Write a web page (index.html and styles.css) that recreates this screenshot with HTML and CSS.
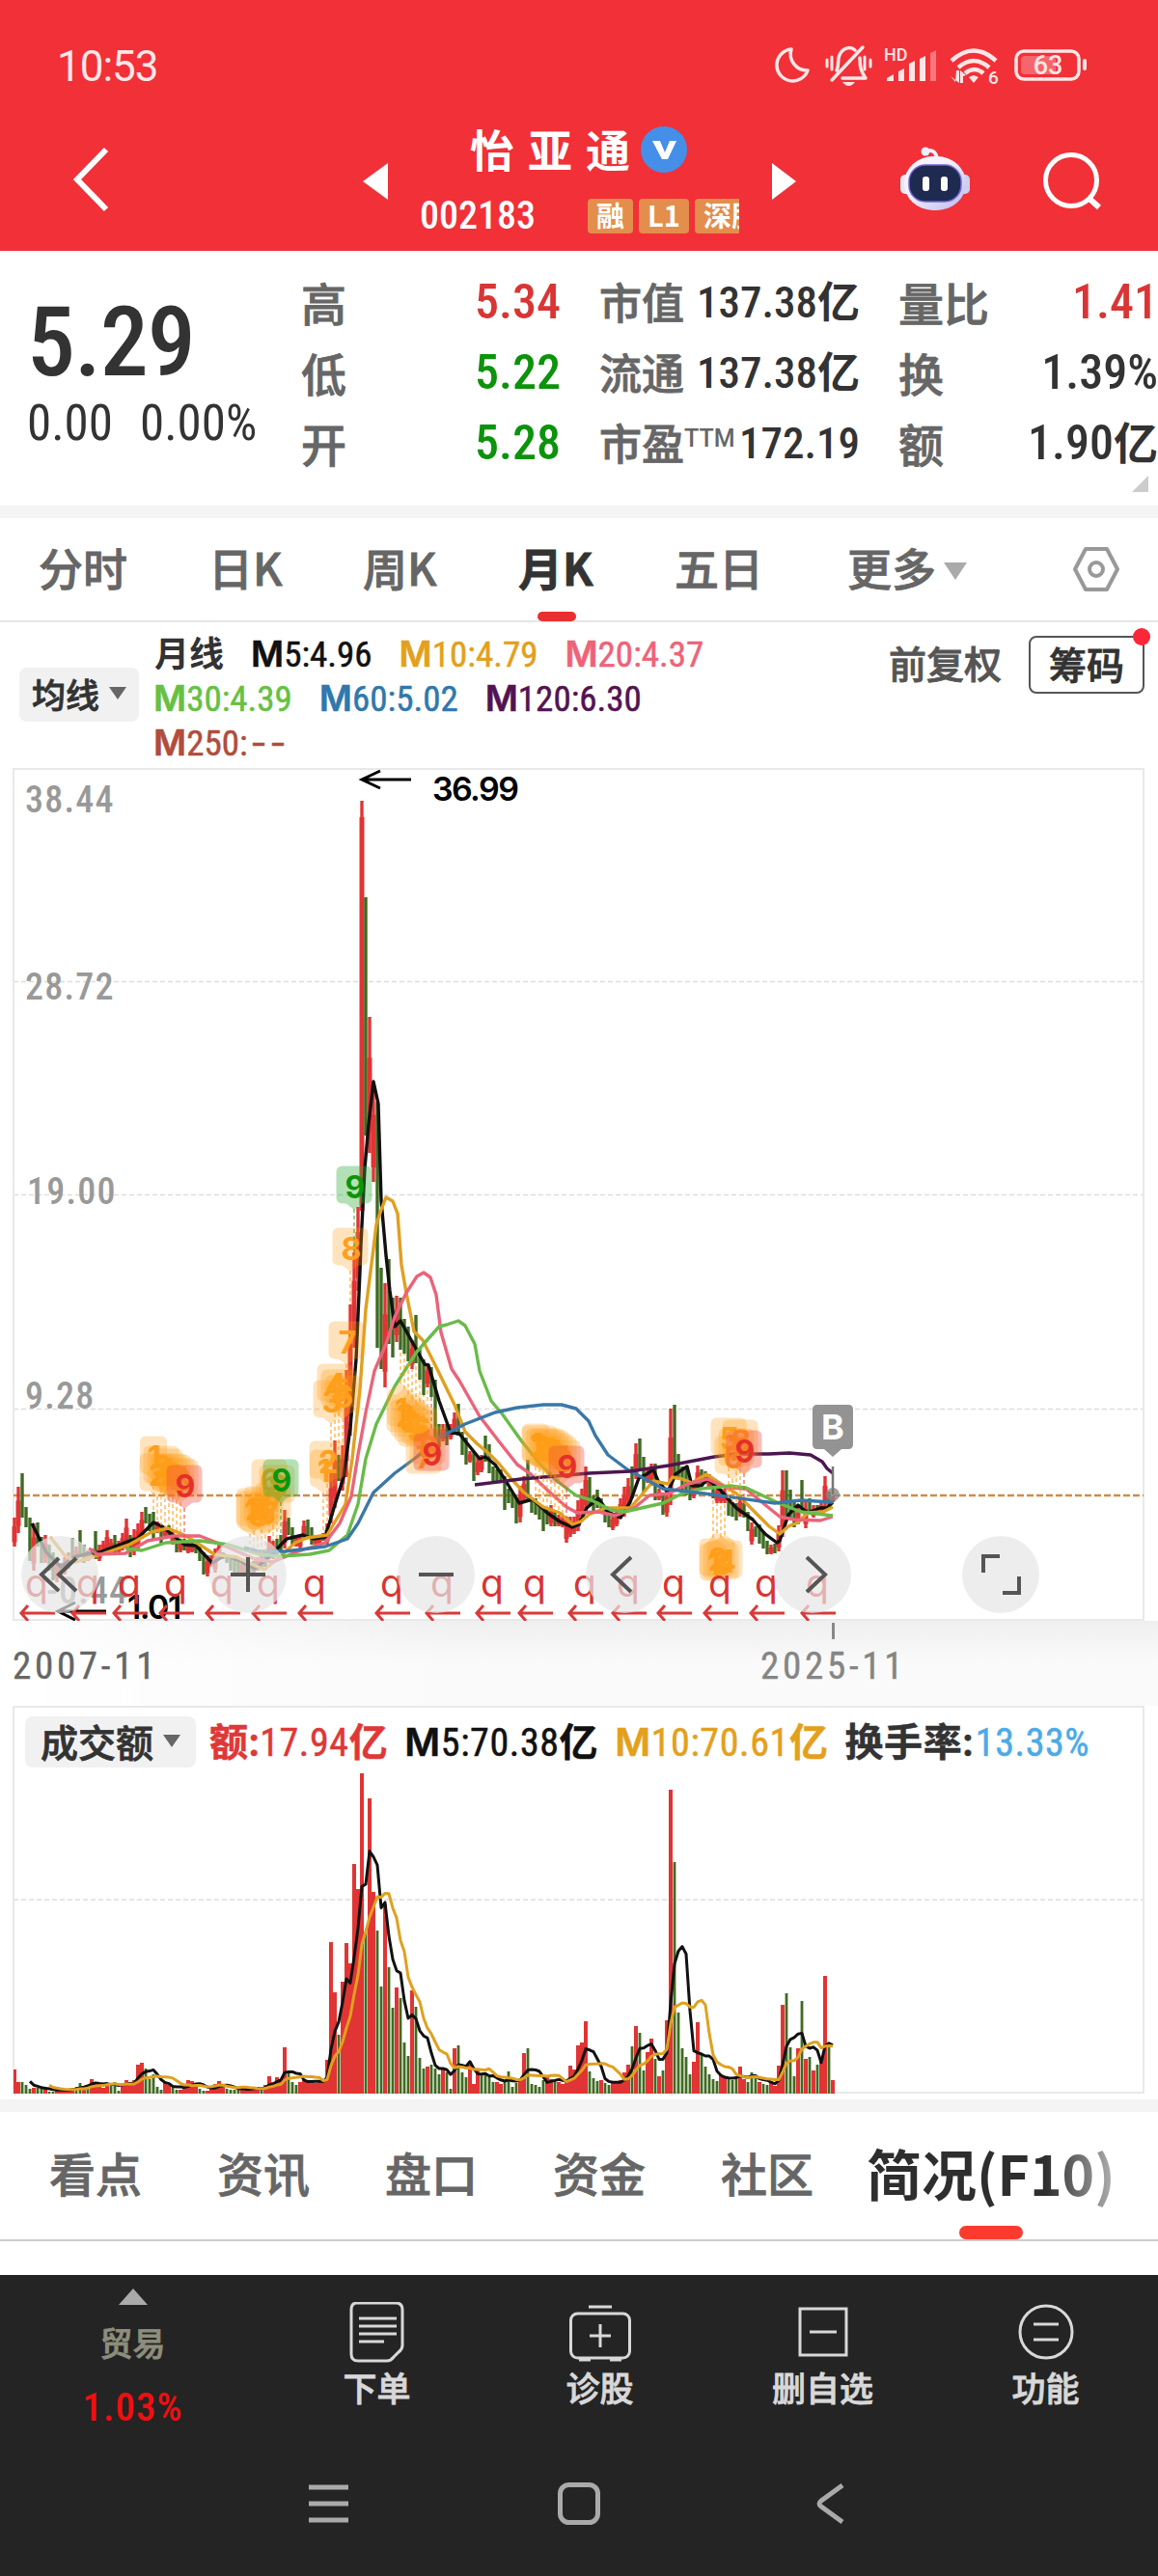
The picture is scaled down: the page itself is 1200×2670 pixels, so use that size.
FILE: index.html
```html
<!DOCTYPE html>
<html lang="zh-CN">
<head>
    <meta charset="UTF-8">
    <meta name="viewport" content="width=device-width, initial-scale=1.0">
    <title>怡亚通 002183</title>
    <link rel="stylesheet" href="styles.css">
</head>

<body>
    <header class="top">
        <div class="status">
            <span class="clock">10:53</span>
            <svg class="status-icons" viewBox="0 0 350 50" width="350" height="50">
                <g fill="none" stroke="#ffe6e6" stroke-width="3.5" stroke-linecap="round" stroke-linejoin="round">
                    <path d="M19 8a16.500 16.500 0 1 0 17 22A17 17 0 0 1 19 8z"/>
                    <path d="M66 30c3-6 0-12 4-18 4-6 11-7 15-3M90 17c0 9 1 14 6 21H72M93 6L61 40"/>
                    <path d="M56 19v7M61 16v13M95 16v13M101 19v7" stroke-width="3"/>
                    <rect x="252" y="10" width="65" height="29" rx="8"/>
                    <path d="M323 20v8" stroke-width="4"/>
                </g>
                <g fill="#ffe6e6">
                    <path d="M72 42h13q-3 4-6.500 4t-6.500-4z"/>
                    <text x="115" y="20" font-size="18" class="num wide">HD</text>
                    <path d="M118 41v-3l7-4v7zM130 41V31l6-3v13zM141 41V23l6-3v21zM152 41V18l6-3v26z"/>
                    <path d="M163 41V12l6-3v32z" opacity=".4"/>
                    <path d="M203 37l5-2 5 2-5 6z"/>
                    <path d="M184 36l5 6 1-12h3v13zM194 43V30l6 5-3 1v7z"/>
                    <text x="223" y="44" font-size="19" font-weight="700" class="num wide">6</text>
                    <rect x="257" y="15" width="36" height="19" rx="4" opacity=".3"/>
                    <text x="285" y="34" font-size="27" text-anchor="middle" class="num wide">63</text>
                </g>
                <g fill="none" stroke="#ffe6e6" stroke-width="4.5">
                    <path d="M185 20q23-21 46 0M192 27q16-14 32 0M199 33q10-8 19 0"/>
                </g>
            </svg>
        </div>
        <div class="titlebar">
            <svg class="back" viewBox="0 0 40 70" width="40" height="70"><path d="M36 4L6 35l30 31" fill="none" stroke="#fff" stroke-width="6"/></svg>
            <svg class="prev" viewBox="0 0 28 40" width="28" height="40"><path d="M27 1v38L1 20z" fill="#fff"/></svg>
            <div class="stock">
                <div class="name"><h1>怡亚通</h1>
                    <svg viewBox="0 0 48 48" width="48" height="48"><circle cx="24" cy="24" r="24" fill="#458fe9"/><path d="M12 15h8l5 12 5-12h7l-9 19h-6z" fill="#fff"/></svg>
                </div>
                <div class="code"><span class="num">002183</span><div class="tags"><b>融</b><b>L1</b><b>深股通</b></div></div>
            </div>
            <svg class="next" viewBox="0 0 28 40" width="28" height="40"><path d="M1 1v38l25-19z" fill="#fff"/></svg>
            <svg class="robot" viewBox="0 0 72 70" width="72" height="70">
                <defs><linearGradient id="shell" x2="1" y2="1"><stop offset=".4" stop-color="#f6f3fc"/><stop offset="1" stop-color="#b9b5ef"/></linearGradient></defs>
                <path d="M26 5q11-4 12 9" fill="none" stroke="#f1eefa" stroke-width="4"/>
                <circle cx="26" cy="5" r="4.5" fill="#efedfb"/>
                <rect x="0" y="29" width="12" height="20" rx="5" fill="#e9e7f6"/><rect x="60" y="29" width="12" height="20" rx="5" fill="#cfcdf1"/>
                <rect x="4" y="10" width="64" height="56" rx="30" fill="url(#shell)"/>
                <rect x="9" y="19" width="54" height="38" rx="17" fill="#1e2a50" stroke="#7263d8" stroke-width="1.5"/>
                <rect x="23" y="31" width="7" height="15" rx="3" fill="#fff"/><rect x="42" y="31" width="7" height="15" rx="3" fill="#fff"/>
            </svg>
            <svg class="search" viewBox="0 0 62 62" width="62" height="62"><g fill="none" stroke="#fff" stroke-width="5"><circle cx="30" cy="30" r="26.5"/><path d="M49 49l10 9" stroke-width="6"/></g></svg>
        </div>
    </header>

    <section class="quote">
        <div class="price">
            <div class="last num">5.29</div>
            <div class="change num"><span>0.00</span><span>0.00%</span></div>
        </div>
        <dl class="c1">
            <dt>高</dt><dd class="num up">5.34</dd>
            <dt>低</dt><dd class="num down">5.22</dd>
            <dt>开</dt><dd class="num down">5.28</dd>
        </dl>
        <dl class="c2">
            <dt>市值</dt><dd class="num">137.38<b>亿</b></dd>
            <dt>流通</dt><dd class="num">137.38<b>亿</b></dd>
            <dt>市盈<sup class="num wide">TTM</sup></dt><dd class="num">172.19</dd>
        </dl>
        <dl class="c3">
            <dt>量比</dt><dd class="num up">1.41</dd>
            <dt>换</dt><dd class="num">1.39%</dd>
            <dt>额</dt><dd class="num">1.90<b>亿</b></dd>
        </dl>
        <i class="corner"></i>
    </section>

    <nav class="periods">
        <a>分时</a><a>日K</a><a>周K</a><a class="on">月K</a><a>五日</a><a>更多<i class="caret"></i></a>
        <svg viewBox="0 0 50 50" width="50" height="50"><g fill="none" stroke="#999" stroke-width="4" stroke-linejoin="round"><path d="M14 4h22l11 21-11 21H14L3 25z"/><circle cx="25" cy="25" r="7"/></g></svg>
    </nav>

    <section class="legend">
        <button class="pick">均线<i class="caret"></i></button>
        <div class="averages">
            <p><strong>月线</strong><span class="num m5"><b>M</b>5:4.96</span><span class="num m10"><b>M</b>10:4.79</span><span class="num m20"><b>M</b>20:4.37</span></p>
            <p><span class="num m30"><b>M</b>30:4.39</span><span class="num m60"><b>M</b>60:5.02</span><span class="num m120"><b>M</b>120:6.30</span></p>
            <p><span class="num m250"><b>M</b>250:<i>--</i></span></p>
        </div>
        <span class="adjust">前复权</span>
        <button class="chips">筹码</button>
    </section>

    <section class="kline">
        <svg id="kline" viewBox="0 790 1200 890" width="1200" height="890">
            <g class="grid">
                <path d="M14 1017.5H1185M14 1238.5H1185M14 1460.5H1185"/>
                <rect x="14" y="797" width="1171" height="882"/>
            </g>
            <path class="now" d="M14 1550H1185"/>
            <g id="candles"></g>
            <g class="lines">
                <polyline class="l5" points="33,1579 38,1589 48,1609 63,1624 77,1614 92,1610 103,1609 132,1598 142,1595 159,1578 168,1582 191,1601 203,1602 220,1620 233,1612 249,1618 264,1626 279,1614 297,1595 314,1591 325,1595 337,1593 346,1563 356,1531 363,1480 369,1409 373,1318 374,1290 378,1211 382,1165 387,1121 392,1144 395,1244 400,1301 404,1338 409,1375 415,1369 425,1387 440,1414 444,1415 455,1452 467,1485 476,1486 497,1512 503,1510 513,1518 523,1533 538,1558 552,1554 567,1568 580,1577 593,1583 600,1580 608,1563 620,1553 630,1567 643,1573 653,1557 662,1532 670,1528 677,1523 682,1535 692,1547 700,1528 712,1520 717,1540 727,1540 733,1533 747,1545 763,1563 780,1575 793,1590 805,1599 808,1597 817,1570 827,1560 837,1568 850,1563 857,1563 863,1557"/>
                <polyline class="l10" points="52,1593 67,1612 78,1619 96,1614 134,1601 157,1588 174,1584 191,1591 207,1601 222,1611 245,1614 274,1627 287,1616 306,1599 318,1594 339,1591 358,1559 365,1512 373,1440 379,1357 387,1294 390,1269 395,1254 400,1241 407,1245 412,1258 416,1311 421,1340 429,1380 438,1389 452,1417 471,1456 482,1484 494,1496 507,1507 517,1517 530,1533 543,1547 563,1562 580,1568 593,1580 602,1577 610,1570 627,1563 653,1563 667,1547 677,1535 692,1538 697,1531 707,1533 717,1537 732,1528 747,1538 763,1548 780,1565 797,1582 808,1590 817,1582 827,1578 837,1568 853,1567 863,1562"/>
                <polyline class="l20" points="92,1605 101,1611 130,1610 153,1597 180,1592 207,1592 230,1601 264,1616 283,1619 306,1609 337,1599 352,1579 364,1551 371,1508 379,1464 388,1421 400,1393 409,1365 421,1340 432,1323 439,1319 446,1324 452,1342 457,1381 468,1419 476,1431 497,1468 517,1494 536,1518 550,1528 570,1547 587,1562 598,1568 620,1567 638,1571 657,1563 673,1550 693,1548 713,1538 733,1533 753,1542 773,1543 787,1555 808,1572 823,1575 850,1576 863,1572"/>
                <polyline class="l30" points="130,1605 147,1607 172,1599 207,1597 237,1601 268,1611 291,1613 321,1611 341,1607 360,1591 371,1559 379,1512 390,1476 409,1437 432,1401 455,1375 463,1373 475,1369 482,1374 492,1393 497,1421 509,1452 520,1465 540,1493 560,1518 577,1535 597,1550 613,1555 633,1565 647,1567 687,1558 707,1548 727,1543 757,1540 773,1542 807,1558 830,1567 863,1571"/>
                <polyline class="l60" points="253,1604 268,1608 295,1608 337,1603 360,1595 371,1579 387,1547 409,1527 432,1510 455,1490 482,1476 513,1464 536,1459 563,1456 582,1456 597,1460 610,1473 617,1488 630,1508 650,1523 687,1543 730,1548 803,1558 830,1555 863,1557"/>
                <polyline class="l120" points="492,1539 540,1533 610,1527 653,1525 693,1519 740,1510 763,1507 797,1507 818,1506 840,1508 852,1515 857,1522 863,1527"/>
            </g>
            <g id="turns"></g>
            <g class="axis num">
                <text x="26" y="842">38.44</text>
                <text x="26" y="1036">28.72</text>
                <text x="28" y="1248">19.00</text>
                <text x="26" y="1460">9.28</text>
                <text x="48" y="1662">-0.44</text>
            </g>
            <g class="extreme">
                <path d="M375 808h51M394 799l-19 9 19 9M60 1670h50M78 1661l-18 9 18 9"/>
                <text x="448" y="830">36.99</text>
                <text x="132" y="1678">1.01</text>
            </g>
            <g id="rights"></g>
            <g class="buy">
                <circle cx="863" cy="1549" r="7"/>
                <path d="M863 1520V1549" stroke-width="2.5"/>
                <path d="M847 1456h32q5 0 5 5v36q0 5-5 5h-7l-9 8v20v-20l-9-8h-7q-5 0-5-5v-36q0-5 5-5z"/>
                <text x="863" y="1492">B</text>
            </g>
        </svg>
        <div class="tools">
            <button><svg viewBox="0 0 80 80"><path d="M39 23L21 40l18 17M57 23L39 40l18 17"/></svg></button>
            <button><svg viewBox="0 0 80 80"><path d="M22 40h36M40 22v36"/></svg></button>
            <button><svg viewBox="0 0 80 80"><path d="M22 40h36"/></svg></button>
            <button><svg viewBox="0 0 80 80"><path d="M47 22L28 40l19 18"/></svg></button>
            <button><svg viewBox="0 0 80 80"><path d="M34 22l19 18-19 18"/></svg></button>
            <button><svg viewBox="0 0 80 80"><path d="M22 38V21h17M59 42v17H42"/></svg></button>
        </div>
    </section>

    <div class="dates num"><span>2007-11</span><span class="end">2025-11</span></div>

    <section class="volume">
        <div class="vol-head">
            <button class="pick">成交额<i class="caret"></i></button>
            <span class="num v0"><b>额:</b>17.94<b>亿</b></span>
            <span class="num v1"><b>M</b>5:70.38<b>亿</b></span>
            <span class="num v2"><b>M</b>10:70.61<b>亿</b></span>
            <span class="num v3"><b>换手率:</b><em>13.33%</em></span>
        </div>
        <svg id="volume" viewBox="14 1834 1171 337" width="1171" height="337">
            <path class="mid" d="M14 1969H1185"/>
        </svg>
    </section>

    <nav class="sections">
        <a>看点</a><a>资讯</a><a>盘口</a><a>资金</a><a>社区</a><a class="on"><b>简况(F10)</b></a>
    </nav>

    <footer>
        <div class="actions">
            <a class="sector"><i class="tri"></i><span>贸易</span><em class="num">1.03%</em></a>
            <a><svg viewBox="0 0 64 64" width="64" height="64"><g><path d="M11 1h40q7 0 7 7v37q0 4-4 7l-5 5q-3 4-7 4H12q-7 0-7-7V8q0-7 6-7z"/><path d="M13 17h39M13 25h39M13 33h39M13 41h26"/></g></svg><span>下单</span></a>
            <a><svg viewBox="0 0 64 64" width="64" height="64"><g><rect x="1.5" y="12" width="61" height="46" rx="7"/><path d="M20 5h24M32 23v24M21 35h22M10 60h12M42 60h12"/></g></svg><span>诊股</span></a>
            <a><svg viewBox="0 0 64 64" width="64" height="64"><g><path d="M8 7h48v48H8zM18 31h28"/></g></svg><span>删自选</span></a>
            <a><svg viewBox="0 0 64 64" width="64" height="64"><g><circle cx="32" cy="31" r="27"/><path d="M19 23h26M19 39h26"/></g></svg><span>功能</span></a>
        </div>
        <div class="keys">
            <svg viewBox="0 0 44 44" width="44" height="44"><path d="M3 5h41M3 22h41M3 39h41"/></svg>
            <svg viewBox="0 0 44 44" width="44" height="44"><rect x="2.500" y="2.500" width="39" height="39" rx="9"/></svg>
            <svg viewBox="0 0 44 44" width="44" height="44"><path d="M34 3L12 19q-4 3 0 6l22 16"/></svg>
        </div>
    </footer>

    <script src="chart.js"></script>
</body>
</html>
```
FILE: styles.css
```css
* {
    box-sizing: border-box;
}

body {
    margin: 0;
    width: 1200px;
    background: #fff;
    color: #333;
    font-family: "Noto Sans CJK SC", sans-serif;
    font-weight: 500;
    overflow-x: hidden;
}

svg {
    display: block;
}

button {
    border: 0;
    padding: 0;
    font: inherit;
    color: inherit;
}

.num {
    font-family: Roboto, "Noto Sans CJK SC", sans-serif;
    font-stretch: 87%;
    font-weight: 500;
    white-space: nowrap;
}

.wide {
    font-stretch: 100%;
}

/* thicken the regular CJK weight a little */
.quote dt,
.periods a,
.sections a,
.pick,
.adjust,
.chips,
.actions span {
    -webkit-text-stroke: .8px;
}

/* header */
.top {
    height: 260px;
    background: #f13038;
    color: #fff;
}

.status {
    display: flex;
    justify-content: space-between;
    height: 125px;
    padding: 43px 49px 0 59px;
}

.clock {
    font: 400 44px/52px Roboto, sans-serif;
    letter-spacing: -1px;
    color: #ffe6e6;
}

.titlebar {
    display: grid;
    grid-template-columns: 301px 60px 364px 134px 144px 62px;
    padding-left: 74px;
    height: 135px;
}

.back {
    margin-top: 26px;
}

.prev,
.next {
    margin-top: 43px;
}

.name {
    display: flex;
    align-items: center;
    margin-left: 52px;
    height: 58px;
}

.name svg {
    margin: 2px 0 0 -3px;
}

h1 {
    margin: -3px 0 0;
    font-size: 46px;
    font-weight: 700;
    letter-spacing: 14px;
    line-height: 56px;
}

.code {
    display: flex;
    justify-content: space-between;
    width: 331px;
    margin-top: 20px;
    font-size: 40px;
    line-height: 42px;
}

.tags {
    display: flex;
    gap: 6px;
    width: 157px;
    overflow: hidden;
    padding-top: 3px;
}

.tags b {
    flex: none;
    height: 36px;
    min-width: 47px;
    padding: 0 9px;
    border-radius: 4px;
    background: #e38e4c;
    font-size: 29px;
    font-weight: 700;
    line-height: 33px;
    text-align: center;
}

.robot {
    margin-top: 27px;
}

.search {
    margin-top: 32px;
    margin-left: 3px;
}

/* quote */
.quote {
    position: relative;
    display: grid;
    grid-template-columns: 244px 268px 269px 268px;
    column-gap: 41px;
    height: 277px;
    padding: 18px 0 0 28px;
    border-bottom: 13px solid #f4f4f4;
}

.quote dl {
    display: grid;
    grid-template-columns: 86px 1fr;
    grid-auto-rows: 73px;
    align-items: center;
    margin: -2px 0 0 -1px;
    font-size: 47px;
    line-height: 73px;
}

.quote dt {
    color: #666;
    white-space: nowrap;
}

.quote dd {
    margin: 2px 0 0;
    text-align: right;
    font-size: 50px;
}

.quote dd b {
    font-size: 46px;
    font-weight: 700;
}

.quote .c2 {
    font-size: 44px;
}

.quote .c2 dd {
    font-size: 45px;
}

.quote .c2 dd b {
    font-size: 44px;
}

.quote sup {
    font-size: 25px;
    vertical-align: 14px;
    line-height: 0;
    -webkit-text-stroke: 0;
}

.quote .up {
    color: #d93535;
}

.quote .down {
    color: #0c930c;
}

.last {
    margin-top: 21px;
    font-size: 100px;
    line-height: 112px;
    letter-spacing: -1px;
}

.change {
    display: flex;
    gap: 28px;
    margin-top: -2px;
    font-size: 51px;
    font-weight: 400;
    line-height: 60px;
}

.corner {
    position: absolute;
    right: 10px;
    bottom: 14px;
    border-left: 17px solid transparent;
    border-bottom: 17px solid #ccc;
}

/* period tabs */
.periods {
    display: grid;
    grid-template-columns: 176px 160px 161px 162px 179px 233px 50px;
    align-items: center;
    height: 108px;
    padding-left: 40px;
    border-bottom: 2px solid #e6e6e6;
    color: #666;
    font-size: 46px;
    line-height: 101px;
}

.periods a {
    height: 106px;
}

.periods .on {
    position: relative;
    color: #333;
    font-weight: 700;
}

.periods .on::after {
    content: "";
    position: absolute;
    left: 20px;
    bottom: -1px;
    width: 40px;
    height: 10px;
    border-radius: 5px;
    background: #e93030;
}

.caret {
    display: inline-block;
    margin-left: 11px;
    border: 9px solid transparent;
    border-top: 13px solid #666;
    border-bottom: 0;
    vertical-align: 6px;
}

.periods .caret {
    margin-left: 8px;
    border-width: 18px 12px 0;
    border-top-color: #aaa;
}

/* moving average legend */
.legend {
    display: flex;
    align-items: flex-start;
    height: 145px;
    padding-left: 20px;
}

.pick {
    display: flex;
    align-items: center;
    justify-content: center;
    border-radius: 8px;
    background: #f1f1f1;
}

.pick .caret {
    margin-left: 10px;
    vertical-align: 0;
}

.legend .pick {
    width: 124px;
    height: 56px;
    margin-top: 47px;
    padding-bottom: 3px;
    font-size: 35px;
}

.averages {
    width: 762px;
    margin-left: 15px;
    padding-top: 10px;
    font-size: 37px;
}

.averages p {
    display: flex;
    gap: 28px;
    margin: 0;
    height: 46px;
    line-height: 46px;
}

.averages strong {
    margin: -3px 0 0 1px;
    font-size: 36px;
}

.averages .num {
    font-weight: 400;
}

.averages .num,
.vol-head .num {
    -webkit-text-stroke: .5px;
}

.averages b,
.v1 b:first-child,
.v2 b:first-child {
    font-family: Inter, sans-serif;
    font-weight: 600;
}

.averages i {
    margin-left: 3px;
    font-family: Inter, sans-serif;
    font-style: normal;
    letter-spacing: 3px;
}

.m5, .v1 { color: #111; }
.m10, .v2 { color: #e3a01c; }
.m20 { color: #ee6379; }
.m30 { color: #66c141; }
.m60 { color: #2f78ad; }
.m120 { color: #531352; }
.m250 { color: #b04d3c; }

.adjust {
    margin-top: 19px;
    color: #555;
    font-size: 39px;
    line-height: 44px;
}

.chips {
    position: relative;
    width: 120px;
    height: 60px;
    margin: 14px 0 0 28px;
    border: 2px solid #555;
    border-radius: 8px;
    background: #fff;
    font-size: 39px;
    line-height: 50px;
    padding-bottom: 5px;
}

.chips::after {
    content: "";
    position: absolute;
    top: -10px;
    right: -8px;
    width: 18px;
    height: 18px;
    border-radius: 50%;
    background: #fb2637;
}

/* main chart */
.kline {
    position: relative;
    height: 890px;
}

.grid path {
    stroke: #ddd;
    stroke-width: 1.500;
    stroke-dasharray: 5 3;
}

.grid rect {
    fill: none;
    stroke: #e9e9e9;
    stroke-width: 2;
}

.now {
    stroke: #cd8d4a;
    stroke-width: 2.500;
    stroke-dasharray: 7 3;
}

.lines polyline {
    fill: none;
    stroke-width: 3.400;
    stroke-linejoin: round;
}

.l5 { stroke: #111; }
.l10 { stroke: #e0a020; }
.l20 { stroke: #ea647a; }
.l30 { stroke: #6abb4a; }
.l60 { stroke: #3a78a8; }
.l120 { stroke: #4c1650; }

.r { fill: #e13434; }
.g { fill: #3f6b22; }

.axis {
    fill: #999;
    font-size: 38px;
    letter-spacing: 1.2px;
}

.extreme path {
    fill: none;
    stroke: #000;
    stroke-width: 3;
}

.extreme text {
    font: 600 34px Inter, sans-serif;
    letter-spacing: -1.6px;
}

.mark {
    fill: #d93434;
    font: 400 39px Inter, sans-serif;
    text-anchor: middle;
}

.mark-arrow {
    fill: none;
    stroke: #d93a38;
    stroke-width: 3;
}

.turn {
    font: 700 32px Inter, sans-serif;
    text-anchor: middle;
}

.drop {
    stroke-width: 1.500;
    stroke-dasharray: 4 3;
}

.buy path {
    fill: #939393;
    stroke: #777;
    stroke-width: 0;
}

.buy path[stroke-width] {
    stroke-width: 2.500;
}

.buy circle {
    fill: #8a8a8a;
    opacity: .8;
}

.buy text {
    fill: #fff;
    font: 700 36px Inter, sans-serif;
    text-anchor: middle;
}

.tools {
    position: absolute;
    top: 802px;
    left: 22px;
    display: flex;
    gap: 115px;
}

.tools button {
    width: 80px;
    height: 80px;
    border-radius: 50%;
    background: rgba(229, 229, 229, .7);
}

.tools path {
    fill: none;
    stroke: #555;
    stroke-width: 4;
}

.dates {
    display: flex;
    height: 88px;
    padding-left: 13px;
    background: linear-gradient(90deg, #fff, rgba(255, 255, 255, 0) 40%), linear-gradient(#efefef, #fafafa 50%);
    color: #666;
    font-size: 39px;
    font-weight: 400;
    line-height: 95px;
    letter-spacing: 3.7px;
    -webkit-text-stroke: .4px;
}

.dates .end {
    position: relative;
    margin-left: 624px;
    color: #858585;
}

.dates .end::before {
    content: "";
    position: absolute;
    left: 74px;
    top: 2px;
    width: 3px;
    height: 17px;
    background: #888;
}

/* turnover */
.volume {
    width: 1173px;
    height: 402px;
    margin: 0 0 6px 13px;
    border: 2px solid #e9e9e9;
}

.volume svg {
    margin: -1px;
}

.vol-head {
    display: flex;
    align-items: center;
    height: 65px;
    padding: 6px 0 0 11px;
    font-size: 40px;
    line-height: 54px;
}

.vol-head .num {
    margin: 2px 17px 0 0;
    font-weight: 400;
    letter-spacing: .6px;
}

.vol-head .pick {
    width: 177px;
    height: 53px;
    margin: 0 14px 0 0;
    padding-bottom: 3px;
    font-size: 39px;
}

.vol-head b {
    font-weight: 700;
}

.v0 { color: #de3838; }

.v3 em {
    margin-left: 2px;
    color: #4caae6;
    font-style: normal;
}

.mid {
    stroke: #e6e6e6;
    stroke-width: 2;
    stroke-dasharray: 5 3;
}

.avg {
    fill: none;
    stroke-width: 3;
    stroke-linejoin: round;
}

/* section tabs */
.sections {
    display: grid;
    grid-template-columns: repeat(4, 174px) 151px 260px;
    height: 147px;
    padding-left: 51px;
    border-top: 13px solid #f4f4f4;
    border-bottom: 2px solid #ccc;
    color: #666;
    font-size: 48px;
    line-height: 125px;
}

.sections .on {
    position: relative;
    font-size: 57px;
}

.sections .on b {
    color: transparent;
    background: linear-gradient(90deg, #2e2e2e 72%, #aaa 98%);
    background-clip: text;
    -webkit-background-clip: text;
    font-weight: 700;
    -webkit-text-stroke: 0;
}

.sections .on::after {
    content: "";
    position: absolute;
    left: 96px;
    bottom: 0;
    width: 66px;
    height: 14px;
    border-radius: 7px;
    background: #fc3b2f;
}

/* footer */
footer {
    height: 312px;
    margin-top: 35px;
    background: #242424;
    color: #d8d8d8;
}

.actions {
    display: grid;
    grid-template-columns: 275px repeat(4, 231px);
    height: 200px;
}

.actions a {
    display: flex;
    flex-direction: column;
    align-items: center;
    padding-top: 28px;
    font-size: 35px;
    line-height: 52px;
}

.actions span {
    margin-top: -2px;
}

.actions g {
    fill: none;
    stroke: #d8d8d8;
    stroke-width: 3;
}

.actions .sector {
    padding-top: 14px;
    color: #8d8d7c;
}

.sector .tri {
    border: 15px solid transparent;
    border-top: 0;
    border-bottom: 17px solid #aaa;
}

.actions .sector span {
    margin-top: 13px;
    font-size: 34px;
}

.sector em {
    margin-top: 15px;
    color: #f00f0f;
    font-size: 41px;
    font-style: normal;
    letter-spacing: 1px;
}

.keys {
    display: flex;
    gap: 217px;
    padding: 15px 0 0 317px;
}

.keys svg {
    fill: none;
    stroke: #aaa;
    stroke-width: 5;
}
```
FILE: chart.js
```javascript
const NS = 'http://www.w3.org/2000/svg';
const STEP = 4;
const LEFT = 15;

function add(parent, tag, attrs, text) {
    const el = document.createElementNS(NS, tag);
    for (const k in attrs) el.setAttribute(k, attrs[k]);
    if (text !== undefined) el.textContent = text;
    parent.appendChild(el);
    return el;
}

// one candle per month: r/g, high, low
const candles = `r1573-1603 r1541-1589 g1527-1573 g1562-1583 g1573-1618 r1579-1628 g1578-1603 g1593-1620 r1591-1620 g1601-1628
g1609-1638 r1614-1640 g1620-1634 r1614-1632 r1609-1626 g1594-1618 r1603-1618 g1586-1614 g1601-1620 r1607-1618
g1605-1614 g1587-1616 r1601-1618 r1597-1610 r1586-1610 r1595-1609 g1591-1610 r1597-1610 r1589-1607 r1574-1605
g1591-1614 r1585-1612 r1579-1605 r1567-1595 g1562-1579 g1569-1587 g1567-1595 r1577-1589 g1581-1601 r1583-1593
g1581-1593 r1587-1601 g1591-1609 r1595-1609 g1595-1607 r1599-1610 r1599-1609 g1601-1610 g1603-1618 g1609-1632
r1612-1634 r1612-1624 r1605-1630 r1599-1614 g1609-1616 g1611-1620 g1612-1628 g1616-1630 g1618-1632 r1618-1632
g1620-1630 r1620-1630 g1618-1630 r1614-1628 r1612-1626 g1608-1624 r1592-1614 r1597-1616 g1595-1612 g1591-1607
r1565-1605 g1573-1591 g1583-1601 r1591-1603 r1591-1605 r1576-1595 g1575-1595 g1583-1601 r1591-1601 r1593-1601
g1589-1597 r1579-1601 r1527-1579 r1493-1563 g1508-1535 r1498-1545 r1420-1531 r1352-1488 r1298-1397 r1251-1338
r830-1255 g930-1177 r1054-1195 r1126-1225 g1142-1397 g1314-1419 r1330-1438 g1305-1393 g1345-1407 r1343-1391
g1345-1399 g1367-1403 g1375-1411 r1389-1419 g1363-1413 g1397-1430 g1409-1446 r1413-1438 g1417-1448 g1430-1496
g1476-1500 r1476-1494 g1476-1498 r1476-1492 r1464-1486 g1455-1488 g1484-1508 g1490-1518 r1504-1516 g1504-1535
r1510-1529 r1508-1526 g1488-1515 g1497-1527 g1520-1537 g1523-1535 g1523-1535 g1530-1565 g1543-1558 g1547-1563
g1552-1579 r1540-1578 r1530-1557 g1513-1555 g1552-1568 g1553-1570 g1560-1575 g1563-1587 g1565-1580 r1560-1582
g1567-1582 r1570-1582 r1572-1583 r1572-1599 r1572-1593 r1572-1590 r1555-1587 r1543-1572 r1520-1567 g1531-1560
g1550-1568 g1544-1563 g1553-1567 g1563-1578 g1568-1583 r1570-1586 r1567-1582 r1553-1573 r1541-1572 r1532-1560
g1520-1553 r1496-1533 g1491-1523 g1510-1547 r1523-1537 r1517-1540 g1517-1555 r1543-1555 g1547-1570 r1543-1572
r1460-1560 g1456-1533 g1507-1533 g1520-1550 g1522-1550 g1533-1555 r1537-1553 r1519-1543 g1523-1540 g1525-1538
r1528-1543 g1533-1553 r1540-1558 r1543-1558 r1543-1558 g1553-1571 g1557-1572 g1558-1576 r1550-1572 g1558-1573
g1567-1587 r1578-1601 g1582-1593 g1580-1600 g1587-1605 g1597-1611 r1601-1611 g1600-1610 r1581-1608 r1524-1593
g1524-1573 g1544-1573 g1557-1583 r1563-1580 g1534-1567 r1555-1584 g1553-1568 r1560-1573 g1560-1567 r1557-1567
r1530-1563 g1546-1563 r1550-1557`.split(/\s+/);

const candleLayer = document.getElementById('candles');
candles.forEach((c, i) => {
    const [high, low] = c.slice(1).split('-').map(Number);
    const x = LEFT + i * STEP;
    const h = low - high;
    add(candleLayer, 'rect', { class: c[0], x: x - 1.7, y: high, width: 3.4, height: h });
    // rising months get the wider body
    if (c[0] === 'r') {
        add(candleLayer, 'rect', { class: 'r', x: x - 2.5, y: high + h * (i === 90 ? 0.04 : 0.3), width: 5, height: h * (i === 90 ? 0.96 : 0.55) });
    }
});

// nine-turn counters: [x of the first one, side of each, y of each, colour of the 9]
const turns = [
    [159, 'uuuuuuuuu', [1508, 1526, 1518, 1521, 1526, 1527, 1530, 1532, 1538], 'red'],
    [259, 'uuuuuuuuu', [1565, 1562, 1568, 1560, 1566, 1532, 1556, 1538, 1532], 'green'],
    [335, 'uuuuuuuuu', [1522, 1513, 1450, 1433, 1439, 1445, 1389, 1292, 1228], 'green'],
    [415, 'ddddddddd', [1459, 1465, 1470, 1475, 1480, 1478, 1508, 1498, 1505], 'red'],
    [555, 'uuuuuuuuu', [1495, 1497, 1500, 1500, 1502, 1505, 1508, 1512, 1518], 'red'],
    [739, 'dddduuuuu', [1619, 1614, 1618, 1616, 1489, 1508, 1500, 1491, 1502], 'red'],
];
const tint = {
    orange: ['#ff9d15', '#ffa01e'],
    red: ['#ef4a38', '#e5302a'],
    green: ['#2fae3a', '#0a960a'],
};

const turnLayer = document.getElementById('turns');
turns.forEach(([x0, sides, ys, last]) => {
    ys.forEach((y, k) => {
        const x = x0 + k * STEP;
        const [box, ink] = tint[k === 8 ? last : 'orange'];
        const half = k === 0 ? 14 : 18.5;
        const up = sides[k] === 'u';
        const month = Math.round((x - LEFT) / STEP);
        const [high, low] = candles[month].slice(1).split('-').map(Number);
        add(turnLayer, 'path', { class: 'drop', stroke: box, opacity: 0.7, d: `M${x} ${up ? y + 25 : y - 25}V${up ? high : low}` });
        const g = add(turnLayer, 'g', { fill: box, opacity: k === 8 ? 0.36 : 0.28 });
        add(g, 'rect', { x: x - half, y: y - 19.5, width: half * 2, height: 39, rx: 6 });
        add(g, 'path', { d: up ? `M${x - 9} ${y + 19}h18l-9 7z` : `M${x - 9} ${y - 19}h18l-9 -7z` });
        add(turnLayer, 'text', { class: 'turn', fill: ink, x: x + 1, y: y + 14 }, k + 1);
    });
});

// ex-rights marks along the bottom
const rights = [38, 91, 134, 182, 230, 278, 326, 406, 458, 510, 554, 606, 651, 698, 746, 794, 847];
const rightLayer = document.getElementById('rights');
rights.forEach(x => {
    add(rightLayer, 'text', { class: 'mark', x, y: 1655 }, 'q');
    add(rightLayer, 'path', { class: 'mark-arrow', d: `M${x - 16} 1672h35M${x - 9} 1664l-7 8 7 8` });
});

// monthly turnover, negative = falling month
const amounts = [
    25, 12, -12, -9, -5, 6, -6, -5, 6, -2, -2, 4, 5, 4, 3, 5, -7, -11, 8, -9,
    15, 12, 8, 6, 11, -10, -12, -3, 10, 14, 12, 14, 30, 32, -26, -15, -20, -7, -4, 12,
    9, -6, -4, 4, 9, 14, 13, 10, -5, -3, 3, 8, 10, 13, 8, -5, -4, -4, -4, 8,
    3, 4, 7, 5, -6, 9, 18, 12, 17, 14, 48, -22, -12, -9, 12, 15, 14, 12, 11, 12,
    14, 35, 157, 105, -61, 116, 156, 135, 238, 212, 332, -168, 306, 209, -169, -111, 196, -131, -89, 110,
    -99, -53, -39, 107, -90, -37, -26, 28, -30, -26, -20, 26, -22, -5, 47, -50, -22, -17, 30, 10,
    24, -20, -20, -17, -12, 12, 10, -14, -23, -7, -11, 15, 42, -47, -10, -9, -7, -14, 18, 15,
    -14, 12, 10, 14, 29, 25, 50, 53, 75, -23, -16, -13, 14, -11, -9, 12, 13, 14, 22, 30,
    -49, 70, -63, -24, 43, 57, -36, 18, -24, 76, 315, -240, -84, -47, -38, -20, 33, 74, -40, -28,
    -20, -15, -13, 19, 18, -16, -14, -15, 28, 15, -12, -22, -16, 12, -10, -9, 12, 8, 29, 92,
    -104, -48, -18, 47, -96, 36, -38, 24, -30, 33, 122, -52, 14
];
const BASE = 2170;
const volume = document.getElementById('volume');
amounts.forEach((v, i) => {
    const h = Math.abs(v);
    const w = v > 0 ? 4 : 2.8;
    add(volume, 'rect', { class: v > 0 ? 'r' : 'g', x: LEFT + i * STEP - w / 2, y: BASE - h, width: w, height: h });
});

function average(n, cls) {
    const pts = [];
    for (let i = n - 1; i < amounts.length; i++) {
        const sum = amounts.slice(i - n + 1, i + 1).reduce((a, b) => a + Math.abs(b), 0);
        pts.push(`${LEFT + i * STEP},${(BASE - sum / n).toFixed(1)}`);
    }
    add(volume, 'polyline', { class: 'avg ' + cls, points: pts.join(' ') });
}
average(5, 'l5');
average(10, 'l10');
```
